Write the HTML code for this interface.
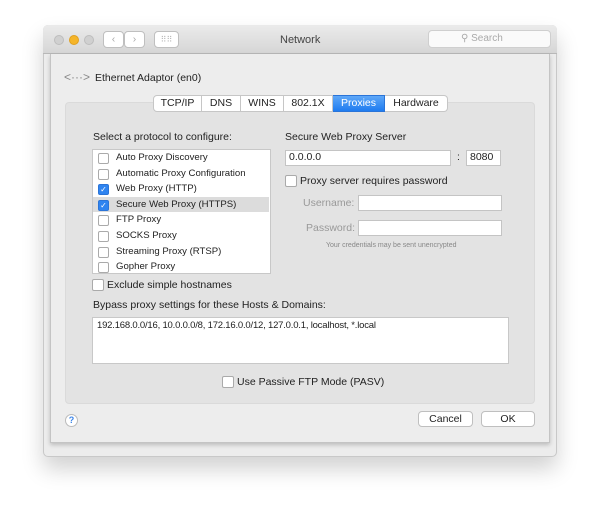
<!DOCTYPE html>
<html><head><style>
*{box-sizing:border-box;margin:0;padding:0}
body{width:600px;height:519px;background:#fff;position:relative;font-family:"Liberation Sans",sans-serif;font-size:10px;color:#222;overflow:hidden}
.a{position:absolute;white-space:nowrap}
.win{left:43px;top:25px;width:514px;height:432px;background:#ececec;border:1px solid #c8c8c8;border-radius:5px;box-shadow:0 12px 22px rgba(0,0,0,.18)}
.title{left:43px;top:25px;width:514px;height:29px;background:linear-gradient(#ebebeb,#d6d6d6);border-radius:5px 5px 0 0;border-bottom:1px solid #b8b8b8}
.sheet{left:50px;top:54px;width:500px;height:389px;background:#ededed;border:1px solid #c4c4c4;border-top:none;box-shadow:0 2px 4px rgba(0,0,0,.2)}
.group{left:65px;top:102px;width:470px;height:302px;background:#e3e3e3;border:1px solid #dadada;border-radius:4px}
.tb{top:95px;height:17px;background:#fff;border:1px solid #c6c6c6;border-left:none;text-align:center;line-height:15px;font-size:10.5px}
.cb{width:11px;height:11px;border:1px solid #aaa;border-radius:2px;background:#fff}
.cbon{background:#2f84f0;border-color:#2a74d8}
.inp{background:#fff;border:1px solid #c4c4c4;height:15px;font-size:10.5px;line-height:13px;padding-left:3px}
.btn{background:#fff;border:1px solid #bfbfbf;border-radius:4px;height:16px;text-align:center;line-height:14px;font-size:10.5px}
.row{left:93px;width:176px;height:15.6px;line-height:15.6px;font-size:9.6px}
</style></head><body>
<div class="a win"></div>
<div class="a title"></div>
<div class="a" style="left:54px;top:35px;width:10px;height:10px;border-radius:50%;background:#d0d0d0;border:1px solid #bdbdbd"></div>
<div class="a" style="left:69px;top:35px;width:10px;height:10px;border-radius:50%;background:#f5b529;border:1px solid #e0a020"></div>
<div class="a" style="left:84px;top:35px;width:10px;height:10px;border-radius:50%;background:#d0d0d0;border:1px solid #bdbdbd"></div>
<div class="a btn" style="left:103px;top:31px;width:21px;height:17px;color:#aaa;line-height:15px">&#8249;</div>
<div class="a btn" style="left:124px;top:31px;width:21px;height:17px;color:#aaa;line-height:15px">&#8250;</div>
<div class="a btn" style="left:154px;top:31px;width:25px;height:17px;color:#bbb;line-height:15px;font-size:8px">⠿⠿</div>
<div class="a" style="left:280px;top:34px;font-size:11px;color:#444">Network</div>
<div class="a" style="left:428px;top:30px;width:123px;height:18px;background:#fafafa;border:1px solid #cfcfcf;border-radius:4px;color:#aaa;font-size:10px;line-height:16px;padding-left:32px">&#9906; Search</div>
<div class="a sheet"></div>
<div class="a" style="left:64px;top:70px;font-size:12px;color:#888">&lt;···&gt;</div>
<div class="a" style="left:95px;top:72px;font-size:10.5px">Ethernet Adaptor (en0)</div>
<div class="a group"></div>
<div class="a tb" style="left:153px;width:49px;border-left:1px solid #c6c6c6;border-radius:4px 0 0 4px">TCP/IP</div>
<div class="a tb" style="left:202px;width:39px">DNS</div>
<div class="a tb" style="left:241px;width:43px">WINS</div>
<div class="a tb" style="left:284px;width:49px">802.1X</div>
<div class="a tb" style="left:333px;width:52px;background:linear-gradient(#5ea7f8,#1f7cf0);color:#fff;border-color:#2a74d8">Proxies</div>
<div class="a tb" style="left:385px;width:63px;border-radius:0 4px 4px 0">Hardware</div>
<div class="a" style="left:93px;top:131px;font-size:10.5px">Select a protocol to configure:</div>
<div class="a" style="left:92px;top:149px;width:179px;height:125px;background:#fff;border:1px solid #c8c8c8"></div>
<div class="a" style="left:93px;top:196.8px;width:176px;height:15.6px;background:#dcdcdc"></div>
<div class="a cb" style="left:98px;top:153px"></div><div class="a row" style="left:116px;top:150px">Auto Proxy Discovery</div>
<div class="a cb" style="left:98px;top:168.6px"></div><div class="a row" style="left:116px;top:165.6px">Automatic Proxy Configuration</div>
<div class="a cb cbon" style="left:98px;top:184.2px;color:#fff;font-size:8px;line-height:9px;text-align:center">✓</div><div class="a row" style="left:116px;top:181.2px">Web Proxy (HTTP)</div>
<div class="a cb cbon" style="left:98px;top:199.8px;color:#fff;font-size:8px;line-height:9px;text-align:center">✓</div><div class="a row" style="left:116px;top:196.8px">Secure Web Proxy (HTTPS)</div>
<div class="a cb" style="left:98px;top:215.4px"></div><div class="a row" style="left:116px;top:212.4px">FTP Proxy</div>
<div class="a cb" style="left:98px;top:231px"></div><div class="a row" style="left:116px;top:228px">SOCKS Proxy</div>
<div class="a cb" style="left:98px;top:246.6px"></div><div class="a row" style="left:116px;top:243.6px">Streaming Proxy (RTSP)</div>
<div class="a cb" style="left:98px;top:262.2px"></div><div class="a row" style="left:116px;top:259.2px">Gopher Proxy</div>
<div class="a cb" style="left:92px;top:279px;width:12px;height:12px"></div>
<div class="a" style="left:107px;top:279px;font-size:10.5px">Exclude simple hostnames</div>
<div class="a" style="left:285px;top:131px;font-size:10.5px">Secure Web Proxy Server</div>
<div class="a inp" style="left:285px;top:150px;width:166px;height:16px">0.0.0.0</div>
<div class="a" style="left:457px;top:151px;font-size:10.5px">:</div>
<div class="a inp" style="left:466px;top:150px;width:35px;height:16px">8080</div>
<div class="a cb" style="left:285px;top:175px;width:12px;height:12px"></div>
<div class="a" style="left:300px;top:175px;font-size:10.5px">Proxy server requires password</div>
<div class="a" style="left:303px;top:197px;font-size:10.5px;color:#999">Username:</div>
<div class="a inp" style="left:358px;top:195px;width:144px;height:16px"></div>
<div class="a" style="left:306px;top:222px;font-size:10.5px;color:#999">Password:</div>
<div class="a inp" style="left:358px;top:220px;width:144px;height:16px"></div>
<div class="a" style="left:326px;top:242px;font-size:7px;color:#888">Your credentials may be sent unencrypted</div>
<div class="a" style="left:93px;top:299px;font-size:10.5px">Bypass proxy settings for these Hosts &amp; Domains:</div>
<div class="a" style="left:92px;top:317px;width:417px;height:47px;background:#fff;border:1px solid #c8c8c8;font-size:9.5px;padding:2px 4px;letter-spacing:-0.2px">192.168.0.0/16, 10.0.0.0/8, 172.16.0.0/12, 127.0.0.1, localhost, *.local</div>
<div class="a cb" style="left:222px;top:376px;width:12px;height:12px"></div>
<div class="a" style="left:237px;top:376px;font-size:10.5px">Use Passive FTP Mode (PASV)</div>
<div class="a" style="left:65px;top:414px;width:13px;height:13px;border-radius:50%;background:#fff;border:1px solid #bbb;color:#3a84e8;font-size:9px;text-align:center;line-height:11px;font-weight:bold">?</div>
<div class="a btn" style="left:418px;top:411px;width:55px">Cancel</div>
<div class="a btn" style="left:481px;top:411px;width:54px">OK</div>
</body></html>
